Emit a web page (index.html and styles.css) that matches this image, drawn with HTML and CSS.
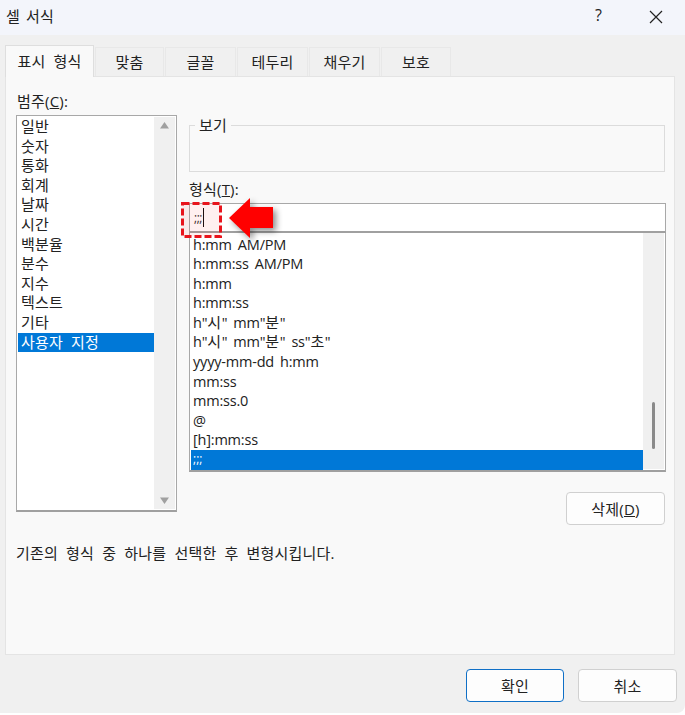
FILE: index.html
```html
<!DOCTYPE html>
<html lang="ko">
<head>
<meta charset="utf-8">
<title>셀 서식</title>
<link rel="stylesheet" href="styles.css">
</head>
<body>
<div class="dialog">
  <header class="titlebar">
    <span class="title">셀 서식</span>
    <span class="help">?</span>
    <svg class="close" width="14" height="14" viewBox="0 0 14 14"><path d="M1 1L13 13M13 1L1 13" stroke="#222" stroke-width="1.2" fill="none"/></svg>
  </header>
  <nav class="tabs">
    <span class="tab active">표시 형식</span>
    <span class="tab w69">맞춤</span>
    <span class="tab w71">글꼴</span>
    <span class="tab w71">테두리</span>
    <span class="tab w71">채우기</span>
    <span class="tab w70">보호</span>
  </nav>
  <main class="panel">
    <div class="columns">
      <section class="left">
        <div class="label">범주(<u>C</u>):</div>
        <div class="listbox catlist">
          <ul class="items">
            <li>일반</li><li>숫자</li><li>통화</li><li>회계</li><li>날짜</li><li>시간</li><li>백분율</li><li>분수</li><li>지수</li><li>텍스트</li><li>기타</li><li class="sel">사용자 지정</li>
          </ul>
          <div class="scroll">
            <svg width="21" height="10" viewBox="0 0 21 10"><path d="M6 8.5L10.5 2L15 8.5Z" fill="#a0a0a0"/></svg>
            <svg width="21" height="10" viewBox="0 0 21 10"><path d="M6 1.5L10.5 8L15 1.5Z" fill="#a0a0a0"/></svg>
          </div>
        </div>
      </section>
      <section class="right">
        <fieldset class="preview"><legend>보기</legend></fieldset>
        <div class="label fmt">형식(<u>T</u>):</div>
        <div class="input"><span class="typed">;;;</span><span class="caret"></span></div>
        <div class="listbox fmtlist">
          <ul class="items latin">
            <li>h:mm AM/PM</li><li>h:mm:ss AM/PM</li><li>h:mm</li><li>h:mm:ss</li><li>h"<span class="ko">시</span>" mm"<span class="ko">분</span>"</li><li>h"<span class="ko">시</span>" mm"<span class="ko">분</span>" ss"<span class="ko">초</span>"</li><li>yyyy-mm-dd h:mm</li><li>mm:ss</li><li>mm:ss.0</li><li>@</li><li>[h]:mm:ss</li><li class="sel">;;;</li>
          </ul>
          <div class="scroll thumbtrack"><span class="thumb"></span></div>
        </div>
        <div class="delrow"><button class="btn del">삭제(<u>D</u>)</button></div>
      </section>
    </div>
    <p class="desc">기존의 형식 중 하나를 선택한 후 변형시킵니다.</p>
  </main>
  <footer class="footer">
    <button class="btn ok">확인</button>
    <button class="btn">취소</button>
  </footer>
  <svg class="callout" width="41" height="36" viewBox="0 0 41 36"><rect x="1.5" y="1.5" width="38" height="33" fill="#ff0000" fill-opacity=".06" stroke="#e8141c" stroke-width="3" stroke-dasharray="7 3"/></svg>
  <svg class="arrow" width="50" height="42" viewBox="0 0 50 42"><path d="M1 21L22 1V10H45V31H22V41Z" fill="#f00"/></svg>
</div>
</body>
</html>
```
FILE: styles.css
```css
* { box-sizing: border-box; }
html, body { margin: 0; padding: 0; background: #fff; }
body {
  width: 685px;
  height: 715px;
  overflow: hidden;
  font-family: "Open Sans", "Noto Sans CJK KR", sans-serif;
  font-size: 15px;
  letter-spacing: .2px;
  word-spacing: 4px;
  color: #222;
}
.dialog {
  position: relative;
  width: 685px;
  height: 713px;
  background: #f0f0f0;
  border-bottom-right-radius: 8px;
  overflow: hidden;
}
.titlebar {
  display: flex;
  align-items: center;
  height: 35px;
  padding: 0 22px 5px 6px;
  background: #f3f5fb;
}
.title { flex: 1; word-spacing: 2px; }
.help { font-size: 16px; margin-right: 47px; }
.close { display: block; margin-top: 3px; }
.tabs {
  display: flex;
  align-items: flex-end;
  height: 41px;
  padding-left: 5px;
  gap: 1px;
  position: relative;
  z-index: 1;
}
.tab {
  display: flex;
  align-items: center;
  justify-content: center;
  height: 29px;
  background: #f0f0f0;
  border: 1px solid #e8e8e8;
  border-bottom: 0;
  padding-bottom: 2px;
}
.tab.active {
  width: 89px;
  height: 32px;
  background: #f9f9f9;
  margin-bottom: -1px;
  border-color: #dedede;
}
.w69 { width: 69px; }
.w70 { width: 70px; }
.w71 { width: 71px; }
.panel {
  height: 579px;
  margin: 0 10px 0 5px;
  background: #f9f9f9;
  border: 1px solid #e4e4e4;
  padding: 0 8px 0 10px;
}
.columns { display: flex; gap: 12px; }
.left { width: 161px; flex: none; }
.right { width: 477px; flex: none; }
.label { line-height: 20px; }
.left .label { margin: 14px 0 4px 1px; }
.listbox {
  display: flex;
  background: #fff;
  border: 1px solid #a8a8a8;
  border-bottom: 2px solid #a0a0a0;
}
.catlist { height: 397px; padding: 1px; }
.items {
  flex: 1;
  list-style: none;
  margin: 0;
  padding: 0;
  line-height: 19.6px;
  white-space: nowrap;
}
.items li { padding-left: 3px; }
.items .sel { background: #0078d7; color: #fff; }
.scroll {
  width: 21px;
  background: #f0f0f0;
  display: flex;
  flex-direction: column;
  justify-content: space-between;
  padding: 3px 0;
}
.scroll svg { display: block; }
.preview {
  height: 56px;
  margin: 39px 0 0;
  padding: 0 0 0 5px;
  border: 1px solid #dcdcdc;
  min-width: 0;
  width: 476px;
}
.preview legend {
  padding: 0 4px;
  line-height: 18px;
}
.fmt { margin-top: 7px; margin-bottom: 4px; }
.input {
  display: flex;
  align-items: center;
  height: 30px;
  background: #fff;
  border: 1px solid #a8a8a8;
  border-bottom: 2px solid #a0a0a0;
  padding-left: 4px;
  font-size: 12px;
}
.typed { color: #333; letter-spacing: -.5px; }
.caret { width: 1px; height: 19px; background: #111; margin-left: 1px; }
.fmtlist { height: 239px; padding: 1.5px 1px 1px; border-top: 0; }
.latin { font-size: 14.5px; letter-spacing: -.2px; word-spacing: 2.5px; }
.latin li { padding-left: 2px; }
.latin .ko { font-size: 15px; letter-spacing: .6px; }
.latin .sel { height: 20px; line-height: 17px; letter-spacing: 0; font-size: 12px; }
.thumbtrack { display: block; margin-top: -1.5px; padding: 0; position: relative; }
.thumb {
  position: absolute;
  left: 9px;
  top: 169px;
  width: 3px;
  height: 47px;
  border-radius: 2px;
  background: #8a8a8a;
}
.delrow { display: flex; justify-content: flex-end; margin-top: 20px; padding-right: 1px; }
.btn {
  width: 99px;
  height: 33px;
  padding: 0;
  background: #fdfdfd;
  border: 1px solid #d0d0d0;
  border-radius: 4px;
  font: inherit;
  letter-spacing: .2px;
  color: #222;
}
.desc { margin: 18px 0 0; line-height: 20px; }
.footer {
  display: flex;
  justify-content: flex-end;
  gap: 14px;
  padding: 14px 8px 0 0;
}
.ok { width: 98px; border-color: #0f6fc6; }
.callout { position: absolute; left: 181px; top: 202px; }
.arrow {
  position: absolute;
  left: 228px;
  top: 197px;
  overflow: visible;
  filter: drop-shadow(3px 3px 3px rgba(0, 0, 0, .45));
}
```
